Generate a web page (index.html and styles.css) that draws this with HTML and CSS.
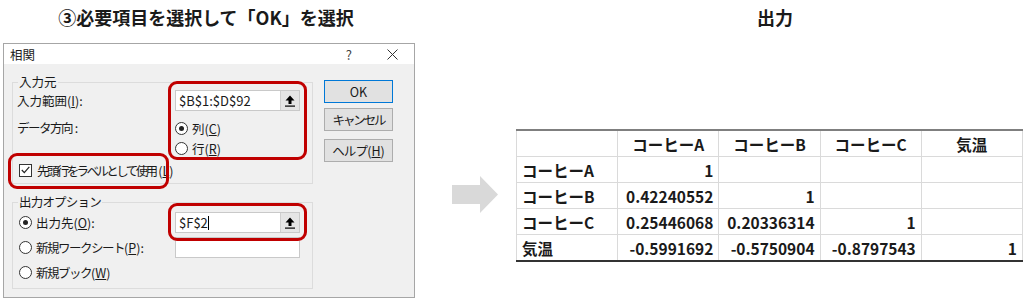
FILE: index.html
```html
<!DOCTYPE html>
<html lang="ja">
<head>
    <meta charset="UTF-8">
    <title>相関の出力</title>
    <link rel="stylesheet" href="styles.css">
</head>
<body>
    <div class="page">
        <!-- 左: 相関ダイアログ -->
        <section class="left">
            <h2 class="caption">③必要項目を選択して「OK」を選択</h2>
            <div class="dialog">
                <div class="titlebar">
                    <span class="title">相関</span>
                    <span class="help">?</span>
                    <span class="close">
                        <svg width="11" height="11" viewBox="0 0 11 11"><path d="M0.5 0.5 L10.5 10.5 M10.5 0.5 L0.5 10.5" stroke="#333" stroke-width="1" fill="none"/></svg>
                    </span>
                </div>
                <div class="dialog-body">
                    <div class="groups">
                        <fieldset class="group">
                            <legend>入力元</legend>
                            <div class="grid">
                                <span class="label">入力範囲(<u>I</u>):</span>
                                <div class="refbox">
                                    <span class="reftext">$B$1:$D$92</span>
                                    <span class="refbtn">
                                        <svg width="10" height="12" viewBox="0 0 10 12"><path d="M5 0.5 L9.5 5.5 L6.5 5.5 L6.5 9 L3.5 9 L3.5 5.5 L0.5 5.5 Z" fill="#000"/><rect x="0" y="10.5" width="10" height="1.2" fill="#000"/></svg>
                                    </span>
                                </div>
                                <span class="label dir"><span class="narrow">データ方向</span> :</span>
                                <div class="radios">
                                    <label class="opt"><span class="radio on"></span>列(<u>C</u>)</label>
                                    <label class="opt"><span class="radio"></span>行(<u>R</u>)</label>
                                </div>
                            </div>
                            <label class="opt check-row">
                                <span class="checkbox">
                                    <svg width="9" height="8" viewBox="0 0 9 8"><path d="M0.8 4 L3.3 6.6 L8.3 0.8" stroke="#222" stroke-width="1.2" fill="none"/></svg>
                                </span><span class="tight">先頭行をラベルとして使用</span>&nbsp;(<u>L</u>)
                            </label>
                        </fieldset>

                        <fieldset class="group out">
                            <legend class="slight">出力オプション</legend>
                            <div class="grid">
                                <label class="opt"><span class="radio on"></span>出力先(<u>O</u>):</label>
                                <div class="refbox">
                                    <span class="reftext">$F$2<span class="caret"></span></span>
                                    <span class="refbtn">
                                        <svg width="10" height="12" viewBox="0 0 10 12"><path d="M5 0.5 L9.5 5.5 L6.5 5.5 L6.5 9 L3.5 9 L3.5 5.5 L0.5 5.5 Z" fill="#000"/><rect x="0" y="10.5" width="10" height="1.2" fill="#000"/></svg>
                                    </span>
                                </div>
                                <label class="opt"><span class="radio"></span><span class="narrow">新規ワークシート</span>(<u>P</u>):</label>
                                <div class="sheetname"></div>
                                <label class="opt"><span class="radio"></span><span class="narrow">新規ブック</span>(<u>W</u>)</label>
                            </div>
                        </fieldset>
                    </div>

                    <div class="actions">
                        <button class="btn default">OK</button>
                        <button class="btn narrower">キャンセル</button>
                        <button class="btn help-btn"><span class="slight">ヘルプ</span>(<u>H</u>)</button>
                    </div>
                </div>

                <!-- 赤枠の注記 -->
                <div class="mark mark-range"></div>
                <div class="mark mark-check"></div>
                <div class="mark mark-out"></div>
            </div>
        </section>

        <div class="arrow">
            <svg width="46" height="37" viewBox="0 0 46 37"><path d="M0 9 L28 9 L28 0 L46 18.5 L28 37 L28 28 L0 28 Z" fill="#d9d9d9"/></svg>
        </div>

        <!-- 右: 出力結果 -->
        <section class="right">
            <h2 class="caption">出力</h2>
            <table class="result">
                <tr>
                    <th></th>
                    <th>コーヒーA</th>
                    <th>コーヒーB</th>
                    <th>コーヒーC</th>
                    <th>気温</th>
                </tr>
                <tr>
                    <td class="name">コーヒーA</td>
                    <td>1</td>
                    <td></td>
                    <td></td>
                    <td></td>
                </tr>
                <tr>
                    <td class="name">コーヒーB</td>
                    <td>0.42240552</td>
                    <td>1</td>
                    <td></td>
                    <td></td>
                </tr>
                <tr>
                    <td class="name">コーヒーC</td>
                    <td>0.25446068</td>
                    <td>0.20336314</td>
                    <td>1</td>
                    <td></td>
                </tr>
                <tr>
                    <td class="name">気温</td>
                    <td>-0.5991692</td>
                    <td>-0.5750904</td>
                    <td>-0.8797543</td>
                    <td>1</td>
                </tr>
            </table>
        </section>
    </div>
</body>
</html>
```

FILE: styles.css
```css
body {
    margin: 0;
    background-color: #fff;
    font-family: 'Noto Sans CJK JP', 'Noto Sans', sans-serif;
    color: #222;
}

.page {
    display: flex;
    width: 1024px;
    height: 302px;
    overflow: hidden;
}

.caption {
    margin: 0;
    height: 43px;
    line-height: 34px;
    font-size: 18px;
    font-weight: bold;
    text-align: center;
    color: #1a1a1a;
}

/* 左側 */
.left {
    width: 420px;
    flex-shrink: 0;
}

.left .caption {
    padding-right: 8px;
}

.dialog {
    position: relative;
    margin-left: 3px;
    width: 410px;
    height: 253px;
    border: 1px solid #a6a6a6;
    background-color: #f0f0f0;
    font-size: 12.5px;
    color: #1a1a1a;
}

/* カナの多いラベルは Meiryo UI 風に詰める */
.narrow {
    letter-spacing: -1.5px;
}

.narrower {
    letter-spacing: -2.1px;
}

.tight {
    letter-spacing: -2.6px;
}

.slight {
    letter-spacing: -0.8px;
}

.titlebar {
    display: flex;
    align-items: center;
    height: 20px;
    padding-left: 6px;
    background-color: #fff;
}

.titlebar .help {
    margin-left: auto;
    margin-right: 35px;
    font-size: 13px;
    color: #444;
}

.titlebar .close {
    display: flex;
    margin-right: 16px;
}

.dialog-body {
    display: flex;
    padding: 10px 0 0 8px;
}

.groups {
    width: 301px;
}

.group {
    margin: 0;
    padding: 0 11px 3px 4px;
    border: 1px solid #dcdcdc;
    min-width: 0;
}

.group legend {
    padding: 0 1px;
    margin-left: 1px;
    line-height: 16px;
}

.group.out {
    margin-top: 10px;
    padding-bottom: 6px;
}

.grid {
    display: grid;
    grid-template-columns: 158px 125px;
    align-items: center;
}

.label.dir {
    align-self: start;
    margin-top: 7px;
    line-height: 20px;
    white-space: pre;
}

.refbox {
    display: flex;
    height: 21px;
    border: 1px solid #c9c9c9;
    background-color: #fff;
    box-sizing: border-box;
}

.reftext {
    flex: 1;
    display: flex;
    align-items: center;
    padding-left: 3px;
    font-size: 13px;
}

.caret {
    display: inline-block;
    width: 1px;
    height: 14px;
    background-color: #000;
}

.refbtn {
    display: flex;
    align-items: center;
    justify-content: center;
    width: 18px;
    background-color: #e5e5e5;
    border-left: 1px solid #cfcfcf;
}

.radios {
    margin-top: 7px;
}

.opt {
    display: flex;
    align-items: center;
    height: 20px;
    white-space: pre;
}

.radio {
    width: 11px;
    height: 11px;
    margin-right: 4px;
    border: 1px solid #333;
    border-radius: 50%;
    background-color: #fff;
    position: relative;
    flex-shrink: 0;
}

.radio.on::after {
    content: '';
    position: absolute;
    left: 3px;
    top: 3px;
    width: 5px;
    height: 5px;
    border-radius: 50%;
    background-color: #222;
}

.check-row {
    margin-top: 2px;
    padding-left: 2px;
    white-space: normal;
}

.checkbox {
    display: flex;
    align-items: center;
    justify-content: center;
    width: 11px;
    height: 11px;
    margin-right: 5px;
    border: 1px solid #333;
    background-color: #fff;
}

.out .grid {
    row-gap: 4px;
    margin-top: 2px;
}

.out .opt {
    padding-left: 2px;
}

.sheetname {
    height: 21px;
    border: 1px solid #c9c9c9;
    background-color: #fff;
    box-sizing: border-box;
}

.actions {
    display: flex;
    flex-direction: column;
    margin-left: 11px;
    padding-top: 6px;
}

.btn {
    width: 69px;
    height: 23px;
    margin-bottom: 5px;
    padding: 0;
    border: 1px solid #adadad;
    background-color: #e1e1e1;
    font-family: inherit;
    font-size: 12.5px;
    color: #1a1a1a;
}

.btn.default {
    border-color: #0078d7;
}

.btn.help-btn {
    margin-top: 3px;
}

.mark {
    position: absolute;
    border: 3px solid #c00000;
    border-radius: 9px;
    box-sizing: border-box;
}

.mark-range {
    left: 164px;
    top: 37px;
    width: 139px;
    height: 79px;
}

.mark-check {
    left: 4px;
    top: 109px;
    width: 161px;
    height: 36px;
}

.mark-out {
    left: 164px;
    top: 159px;
    width: 139px;
    height: 38px;
}

/* 矢印 */
.arrow {
    width: 96px;
    flex-shrink: 0;
    padding-top: 176px;
    padding-left: 32px;
    box-sizing: border-box;
}

/* 右側 */
.right {
    width: 508px;
    flex-shrink: 0;
}

.right .caption {
    padding-left: 10px;
}

.result {
    margin-top: 86px;
    width: 507px;
    border-collapse: collapse;
    table-layout: fixed;
    font-size: 15.5px;
    font-weight: bold;
    color: #1a1a1a;
}

.result th,
.result td {
    height: 25px;
    padding: 0 5px;
    border: 1px solid #dadada;
    text-align: right;
    white-space: nowrap;
}

.result th {
    text-align: center;
    border-top: 2px solid #7f7f7f;
}

.result td.name {
    text-align: left;
}

.result tr:last-child td {
    border-bottom: 2px solid #333;
}
```
